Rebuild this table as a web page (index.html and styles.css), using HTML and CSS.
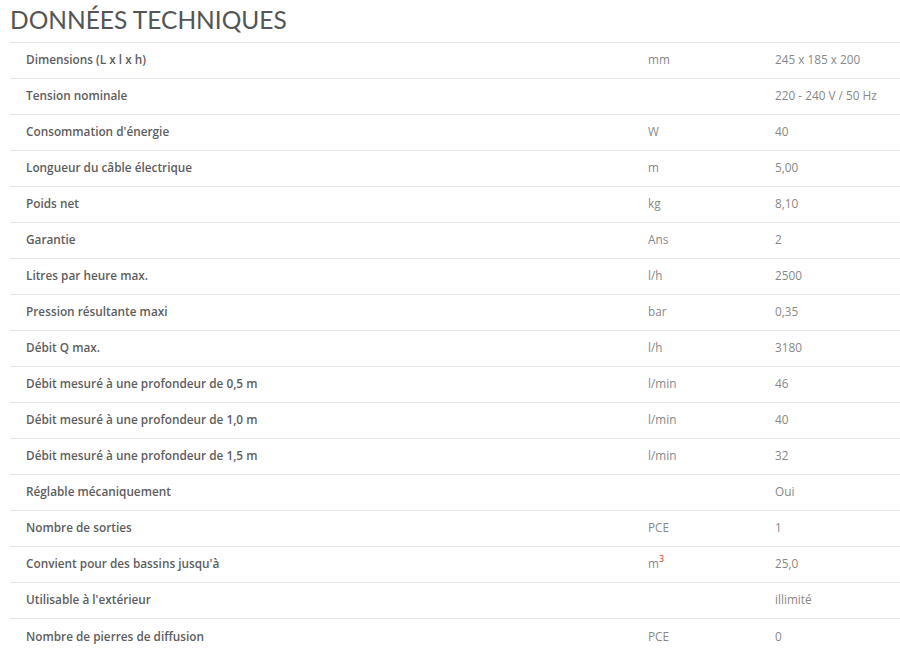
FILE: index.html
```html
<!DOCTYPE html>
<html lang="fr">
<head>
<meta charset="utf-8">
<title>Données techniques</title>
<link rel="stylesheet" href="styles.css">
</head>
<body>
<section class="specs">
  <h2 class="specs-title">DONNÉES TECHNIQUES</h2>
  <div class="specs-table">
    <div class="row"><span class="label">Dimensions (L x l x h)</span><span class="unit">mm</span><span class="value">245 x 185 x 200</span></div>
    <div class="row"><span class="label">Tension nominale</span><span class="unit"></span><span class="value">220 - 240 V / 50 Hz</span></div>
    <div class="row"><span class="label">Consommation d'énergie</span><span class="unit">W</span><span class="value">40</span></div>
    <div class="row"><span class="label">Longueur du câble électrique</span><span class="unit">m</span><span class="value">5,00</span></div>
    <div class="row"><span class="label">Poids net</span><span class="unit">kg</span><span class="value">8,10</span></div>
    <div class="row"><span class="label">Garantie</span><span class="unit">Ans</span><span class="value">2</span></div>
    <div class="row"><span class="label">Litres par heure max.</span><span class="unit">l/h</span><span class="value">2500</span></div>
    <div class="row"><span class="label">Pression résultante maxi</span><span class="unit">bar</span><span class="value">0,35</span></div>
    <div class="row"><span class="label">Débit Q max.</span><span class="unit">l/h</span><span class="value">3180</span></div>
    <div class="row"><span class="label">Débit mesuré à une profondeur de 0,5 m</span><span class="unit">l/min</span><span class="value">46</span></div>
    <div class="row"><span class="label">Débit mesuré à une profondeur de 1,0 m</span><span class="unit">l/min</span><span class="value">40</span></div>
    <div class="row"><span class="label">Débit mesuré à une profondeur de 1,5 m</span><span class="unit">l/min</span><span class="value">32</span></div>
    <div class="row"><span class="label">Réglable mécaniquement</span><span class="unit"></span><span class="value">Oui</span></div>
    <div class="row"><span class="label">Nombre de sorties</span><span class="unit">PCE</span><span class="value">1</span></div>
    <div class="row"><span class="label">Convient pour des bassins jusqu'à</span><span class="unit">m<sup class="sup">3</sup></span><span class="value">25,0</span></div>
    <div class="row"><span class="label">Utilisable à l'extérieur</span><span class="unit"></span><span class="value">illimité</span></div>
    <div class="row last"><span class="label">Nombre de pierres de diffusion</span><span class="unit">PCE</span><span class="value">0</span></div>
  </div>
</section>
</body>
</html>
```

FILE: styles.css
```css
html, body {
  margin: 0;
  padding: 0;
  background: #fff;
}

body {
  font-family: "Open Sans", "Liberation Sans", sans-serif;
}

.specs {
  padding: 0 0 0 10px;
}

.specs-title {
  margin: 0;
  padding-top: 6px;
  height: 36px;
  box-sizing: border-box;
  font-family: Lato, "Open Sans", sans-serif;
  font-weight: 400;
  font-size: 24.5px;
  line-height: 28px;
  color: #555;
}

.specs-table {
  border-top: 1px solid #e3e3e3;
  margin-top: 6px;
}

.row {
  display: grid;
  grid-template-columns: 622px 127px 1fr;
  height: 36px;
  padding-bottom: 3px;
  align-items: center;
  border-bottom: 1px solid #e3e3e3;
  box-sizing: border-box;
  font-size: 11.8px;
}

.row.last {
  border-bottom: none;
}

.label {
  padding-left: 16px;
  font-weight: 600;
  color: #5e5e5e;
}

.unit,
.value {
  padding-left: 16px;
  color: #888;
}

.sup {
  color: #e03030;
  font-size: 9px;
  vertical-align: 6px;
  line-height: 0;
}
```
